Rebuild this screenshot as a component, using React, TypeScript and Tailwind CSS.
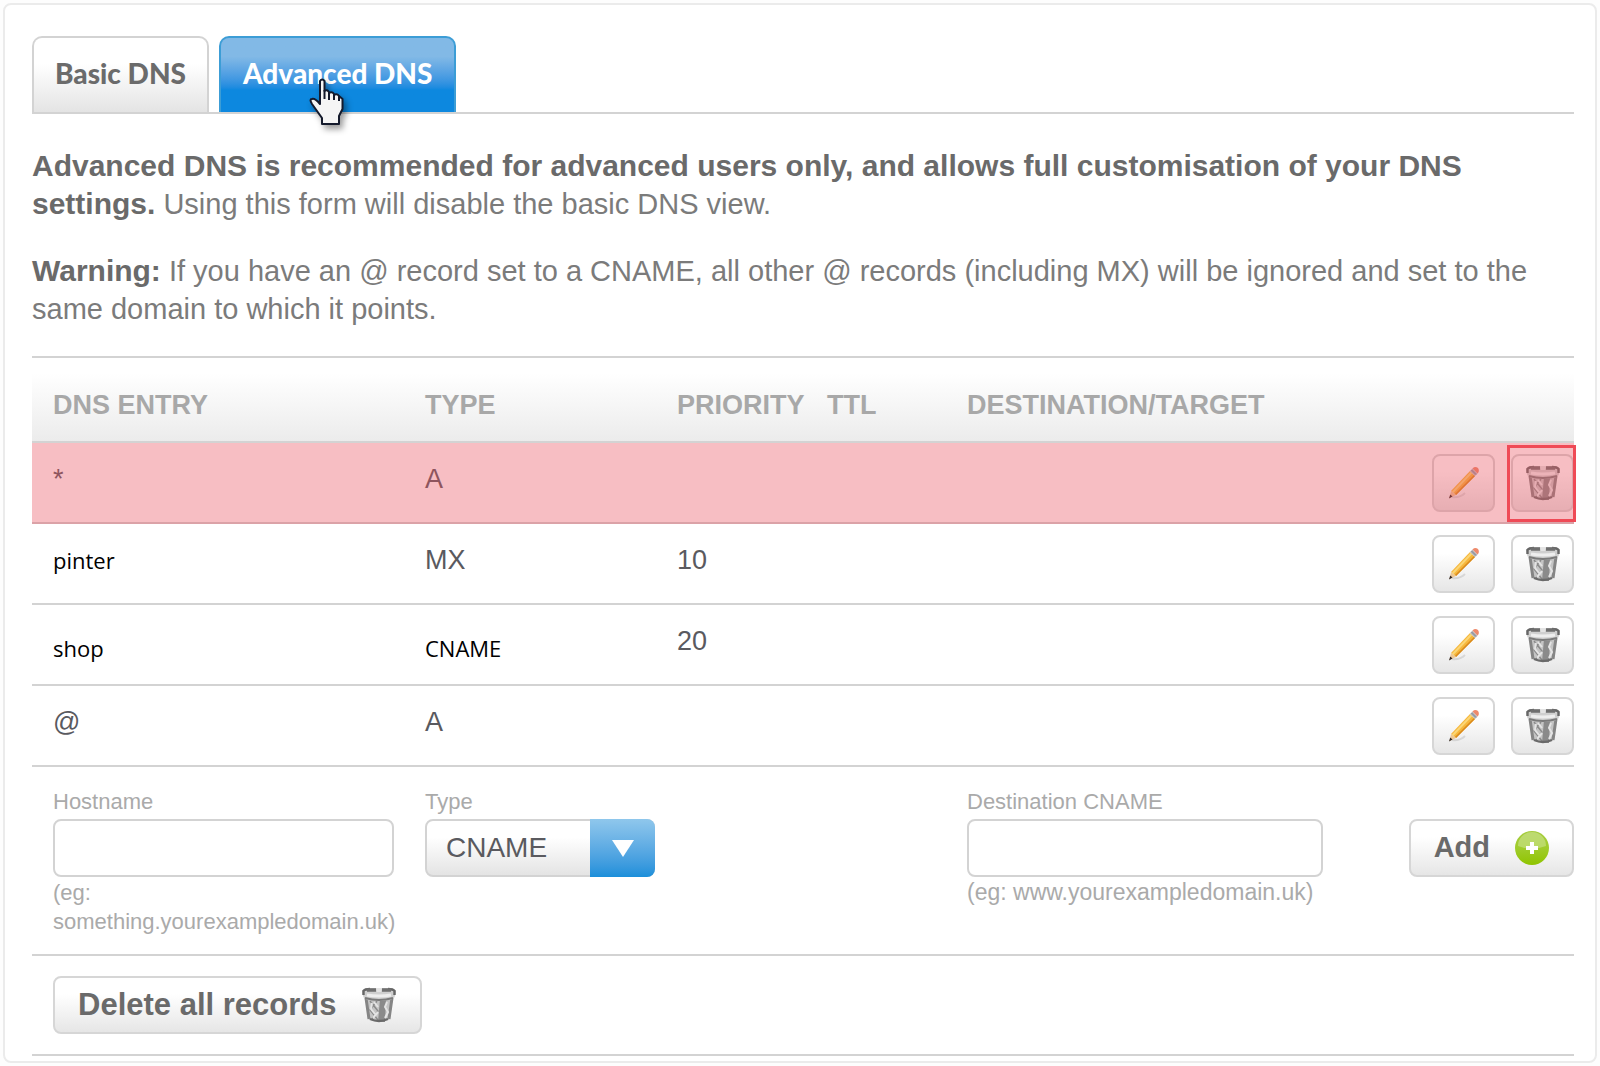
import { useState } from 'react';
import type { ReactNode } from 'react';

interface DnsRecord {
  id: number;
  entry: string;
  type: string;
  priority: string;
  ttl: string;
  target: string;
  edited?: string[];
  highlighted?: boolean;
}

const initialRecords: DnsRecord[] = [
  { id: 1, entry: '*', type: 'A', priority: '', ttl: '', target: '', highlighted: true },
  { id: 2, entry: 'pinter', type: 'MX', priority: '10', ttl: '', target: '', edited: ['entry'] },
  { id: 3, entry: 'shop', type: 'CNAME', priority: '20', ttl: '', target: '', edited: ['entry', 'type'] },
  { id: 4, entry: '@', type: 'A', priority: '', ttl: '', target: '' },
];

const cellBase = 'h-[81px] border-b-2 border-[#d3d3d3] p-0 pl-[21px]';
const buttonBase =
  'flex h-[58px] items-center justify-center rounded-lg border-2 border-[#d6d6d6] bg-linear-to-b from-white from-30% to-[#e6e6e6]';

function TrashIcon() {
  return (
    <svg width="36" height="36" viewBox="0 0 36 36" fill="none" aria-hidden="true">
      <path d="M4 9 L7 32 Q18 37 29 32 L32 9 Z" fill="#c4c4c4" />
      <path d="M19 12 L25 12 L24 35 L17 35 Z" fill="#8a8a8a" />
      <path d="M5 11 L8 32 M31 11 L28 32" stroke="#858585" strokeWidth="3" />
      <path d="M9 14 L17 24 L11 32 M16 14 L9 23 L17 33" stroke="#8a8a8a" strokeWidth="1.4" />
      <path d="M11 16 L10 22 L14 27 M13 15 L17 20 M12 31 L17 25" stroke="#e4e4e4" strokeWidth="2" />
      <path d="M26 15 L24 20 L27 25 L24 31" stroke="#e4e4e4" strokeWidth="2" />
      <path d="M9 32 Q18 36 27 32" stroke="#6a6a6a" strokeWidth="2.4" />
      <path d="M1 4 Q2 1 9 1 L27 1 Q34 1 35 4 L34 9 Q33 12 28 13 Q18 15 8 13 Q3 12 2 9 Z" fill="#cfcfcf" />
      <path d="M4 11 Q18 15 32 11" stroke="#7a7a7a" strokeWidth="2" />
      <path d="M6 8 Q18 10 30 8" stroke="#eeeeee" strokeWidth="3" />
      <path d="M2.500 8 V4 Q4 2 9 2 M33.500 8 V4 Q32 2 27 2" stroke="#666666" strokeWidth="2.4" />
      <path d="M6 3 Q10 3 15 3 M21 3 Q25 3 30 3" stroke="#6f6f6f" strokeWidth="3.4" />
      <path d="M15 1 H21 L20 5 H16 Z" fill="#e4e4e4" />
    </svg>
  );
}

function PencilIcon() {
  return (
    <svg width="32" height="34" viewBox="0 0 32 34" fill="none" aria-hidden="true">
      <path d="M4 31 Q12 32 17 27" stroke="#000000" strokeOpacity="0.1" strokeWidth="2" />
      <path d="M3 25 L22 5 L27 10 L8 29 Z" fill="#f6b73c" />
      <path d="M4.500 26.500 L23.500 6.500" stroke="#fbd676" strokeWidth="2" />
      <path d="M7.500 28.500 L26.500 9.500" stroke="#d98a1e" strokeWidth="1.6" />
      <path d="M3 25 L8 29 L1.500 32 Z" fill="#ecc795" />
      <path d="M2.200 28.500 L4.500 30.600 L1 32.500 Z" fill="#2f2624" />
      <path d="M22 5 L24.500 2.500 L29.500 7.500 L27 10 Z" fill="#b3b5bb" />
      <path d="M23.500 4 L28 8.500" stroke="#7f8289" strokeWidth="1" />
      <path d="M24.500 2.500 Q27 0 30 2 Q32 5 29.500 7.500 Z" fill="#ee8a6c" />
    </svg>
  );
}

function AddIcon() {
  return (
    <svg width="34" height="34" viewBox="0 0 34 34" aria-hidden="true">
      <defs>
        <linearGradient id="addFill" x1="0" y1="0" x2="0" y2="1">
          <stop offset="0" stopColor="#a5cc3c" />
          <stop offset="0.5" stopColor="#a0cc2c" />
          <stop offset="1" stopColor="#8fc400" />
        </linearGradient>
      </defs>
      <circle cx="17" cy="17" r="17" fill="url(#addFill)" />
      <path d="M3 15 A14 14 0 0 1 31 15 Q17 20 3 15 Z" fill="#ffffff" fillOpacity="0.28" />
      <path d="M17 11 V23 M11 17 H23" stroke="#ffffff" strokeWidth="4" />
    </svg>
  );
}

function HandCursor() {
  return (
    <svg
      className="pointer-events-none absolute top-[40px] left-[88px] drop-shadow-[3px_4px_3px_rgba(0,0,0,0.4)]"
      width="36"
      height="48"
      viewBox="0 0 36 48"
      aria-hidden="true"
    >
      <path
        d="M11 3 Q13 0 15.500 3 V13 Q18 11 20 14 V15 Q23 13 25 16 V17 Q28 15 30 18 L33.500 21 V31 L30 38 V46 H13 V40 L3 26 Q0 21 3 21 Q6 20 11 26 Z"
        fill="#f5f5f5"
        stroke="#141a2c"
        strokeWidth="2"
        strokeLinejoin="round"
      />
      <path d="M15.500 12 V21 M20 14 V22 M25 16 V22 M30 18 V23" stroke="#141a2c" strokeWidth="2" />
    </svg>
  );
}

function IconButton({ label, onClick, children }: { label: string; onClick?: () => void; children: ReactNode }) {
  return (
    <button type="button" aria-label={label} onClick={onClick} className={`${buttonBase} w-[63px]`}>
      {children}
    </button>
  );
}

function RecordRow({ record, onDelete }: { record: DnsRecord; onDelete: () => void }) {
  const edited = record.edited || [];
  const align = edited.length > 1 ? 'align-middle pt-1.5' : 'align-top pt-[18px]';
  const cellClass = (field: string) =>
    edited.includes(field)
      ? `${cellBase} ${align} font-['Open_Sans',sans-serif] text-[22px] leading-9 text-black`
      : `${cellBase} align-top pt-[18px] text-[27px] leading-9 text-[#5a5a5f]`;

  return (
    <tr className="relative">
      <td className={cellClass('entry')}>{record.entry}</td>
      <td className={cellClass('type')}>{record.type}</td>
      <td className={cellClass('priority')}>{record.priority}</td>
      <td className={cellClass('ttl')}>{record.ttl}</td>
      <td className={cellClass('target')}>{record.target}</td>
      <td className="border-b-2 border-[#d3d3d3] p-0">
        <div className="flex justify-end gap-4">
          <IconButton label="Edit record">
            <PencilIcon />
          </IconButton>
          <div className="relative">
            <IconButton label="Delete record" onClick={onDelete}>
              <TrashIcon />
            </IconButton>
            {record.highlighted && (
              <span className="pointer-events-none absolute -top-[9px] -right-[2px] -bottom-[10px] -left-[4px] z-10 border-3 border-[#ef4a56]" />
            )}
          </div>
        </div>
        {record.highlighted && <span className="pointer-events-none absolute inset-0 bg-[#e94f5b]/37" />}
      </td>
    </tr>
  );
}

export default function App() {
  const [records, setRecords] = useState<DnsRecord[]>(initialRecords);
  const [hostname, setHostname] = useState('');
  const [type, setType] = useState('CNAME');
  const [destination, setDestination] = useState('');

  const handleSubmit = (e: React.FormEvent) => {
    e.preventDefault();
    setRecords(prev => [
      ...prev,
      { id: Date.now(), entry: hostname, type, priority: '', ttl: '', target: destination },
    ]);
    setHostname('');
    setDestination('');
  };

  return (
    <div className="min-h-screen bg-[#fdfdfd] p-[3px] font-['Liberation_Sans',Arial,sans-serif]">
      <div className="rounded-lg border-2 border-[#ebebeb] bg-white pt-[31px] pr-[21px] pb-[5px] pl-[27px]">
        <div
          className="flex gap-[10px] border-b-2 border-[#d3d3d3] font-['Lato',sans-serif] text-[28px] font-black"
          role="tablist"
        >
          <button
            type="button"
            role="tab"
            aria-selected="false"
            className="h-[76px] rounded-t-[10px] border-2 border-b-0 border-[#d3d3d3] bg-linear-to-b from-white from-35% to-[#e4e4e4] px-[21px] pb-1 text-[#6b6b6b]"
          >
            Basic DNS
          </button>
          <button
            type="button"
            role="tab"
            aria-selected="true"
            className="relative h-[76px] rounded-t-[10px] border-2 border-b-0 border-[#3c9dd6] bg-linear-to-b from-[#82b9e6] from-25% to-[#0d88df] to-70% px-[22px] pb-1 text-white"
          >
            Advanced DNS
            <HandCursor />
          </button>
        </div>

        <div className="pt-[33px] text-[29px] leading-[38px] text-[#7b7b7b]">
          <p>
            <strong className="text-[30px] text-[#6a6a6a]">
              Advanced DNS is recommended for advanced users only, and allows full customisation of your DNS settings.
            </strong>{' '}
            Using this form will disable the basic DNS view.
          </p>
          <p className="mt-[29px]">
            <strong className="text-[30px] text-[#6a6a6a]">Warning:</strong> If you have an @ record set to a CNAME, all
            other @ records (including MX) will be ignored and set to the same domain to which it points.
          </p>
        </div>

        <table className="mt-[28px] w-full table-fixed border-separate border-spacing-0 text-left">
          <colgroup>
            <col className="w-[372px]" />
            <col className="w-[252px]" />
            <col className="w-[150px]" />
            <col className="w-[140px]" />
            <col />
            <col className="w-[160px]" />
          </colgroup>
          <thead>
            <tr className="bg-linear-to-b from-white from-20% to-[#ebebeb] text-[27px] text-[#a8a8a8]">
              {['DNS ENTRY', 'TYPE', 'PRIORITY', 'TTL', 'DESTINATION/TARGET', ''].map(title => (
                <th
                  key={title}
                  scope="col"
                  className="h-[87px] border-y-2 border-[#d3d3d3] p-0 pt-3 pl-[21px] font-bold whitespace-nowrap"
                >
                  {title}
                </th>
              ))}
            </tr>
          </thead>
          <tbody>
            {records.map(record => (
              <RecordRow
                key={record.id}
                record={record}
                onDelete={() => setRecords(prev => prev.filter(r => r.id !== record.id))}
              />
            ))}
          </tbody>
        </table>

        <form
          onSubmit={handleSubmit}
          className="grid h-[189px] grid-cols-[372px_252px_290px_1fr_auto] border-b-2 border-[#d3d3d3] pt-5 text-[#aaaaaa]"
        >
          <div className="pl-[21px]">
            <label htmlFor="hostname" className="block text-[22px] leading-[30px]">
              Hostname
            </label>
            <input
              id="hostname"
              type="text"
              value={hostname}
              onChange={e => setHostname(e.target.value)}
              className="mt-[2px] block h-[58px] w-[341px] rounded-lg border-2 border-[#d3d3d3] bg-white px-4 text-[27px] text-[#5a5a5f]"
            />
            <p className="w-[341px] pt-px text-[22px] leading-[29px]">(eg: something.yourexampledomain.uk)</p>
          </div>
          <div className="pl-[21px]">
            <label htmlFor="type" className="block text-[22px] leading-[30px]">
              Type
            </label>
            <div className="relative mt-[2px] w-[230px]">
              <select
                id="type"
                value={type}
                onChange={e => setType(e.target.value)}
                className="block h-[58px] w-full appearance-none rounded-lg border-2 border-[#d3d3d3] bg-linear-to-b from-white from-30% to-[#e4e4e4] pl-[19px] text-[28px] text-[#5a5a5f]"
              >
                <option>CNAME</option>
                <option>A</option>
                <option>MX</option>
              </select>
              <span className="pointer-events-none absolute inset-y-0 right-0 flex w-[65px] items-center justify-center rounded-r-lg bg-linear-to-b from-[#8fc7ec] to-[#1a8fda]">
                <svg width="22" height="17" viewBox="0 0 22 17" aria-hidden="true">
                  <path d="M0 0 H22 L11 17 Z" fill="#ffffff" />
                </svg>
              </span>
            </div>
          </div>
          <div className="col-start-4 pl-[21px]">
            <label htmlFor="destination" className="block text-[22px] leading-[30px]">
              Destination CNAME
            </label>
            <input
              id="destination"
              type="text"
              value={destination}
              onChange={e => setDestination(e.target.value)}
              className="mt-[2px] block h-[58px] w-[356px] rounded-lg border-2 border-[#d3d3d3] bg-white px-4 text-[27px] text-[#5a5a5f]"
            />
            <p className="pt-px text-[23px] leading-[29px]">(eg: www.yourexampledomain.uk)</p>
          </div>
          <div className="pt-8">
            <button type="submit" className={`${buttonBase} gap-[25px] px-[23px] text-[29px] font-bold text-[#6a6a6a]`}>
              Add
              <AddIcon />
            </button>
          </div>
        </form>

        <div className="border-b-2 border-[#d3d3d3] py-5 pl-[21px]">
          <button
            type="button"
            onClick={() => setRecords([])}
            className={`${buttonBase} gap-[25px] px-[23px] text-[31px] font-bold text-[#6a6a6a]`}
          >
            Delete all records
            <TrashIcon />
          </button>
        </div>
      </div>
    </div>
  );
}
